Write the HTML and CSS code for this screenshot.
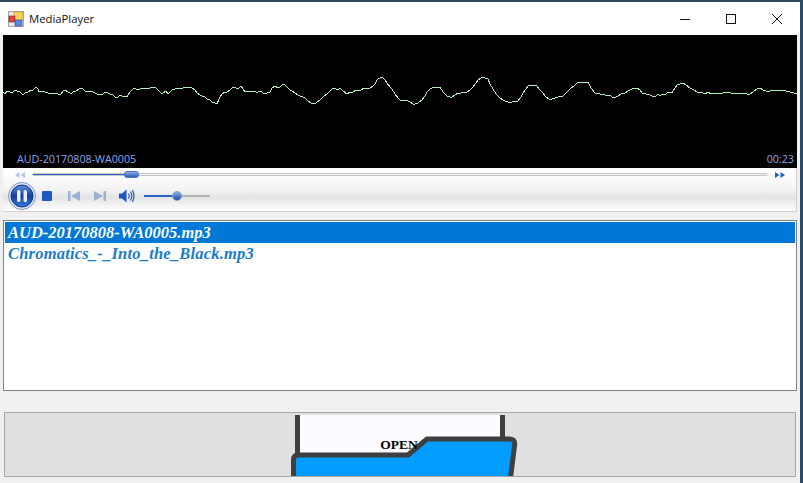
FILE: index.html
```html
<!DOCTYPE html>
<html lang="en">
<head>
    <meta charset="UTF-8">
    <meta name="viewport" content="width=device-width, initial-scale=1.0">
    <title>MediaPlayer</title>
    <link rel="stylesheet" href="styles.css">
</head>
<body>

<div class="window">
    <div class="title-bar">
        <svg class="app-icon" width="16" height="16" viewBox="0 0 16 16">
            <rect x="0.5" y="0.5" width="15" height="15" fill="#e8e8e8" stroke="#a8a8a8"/>
            <rect x="6" y="1" width="9" height="8" fill="#f5d25a" stroke="#c89a20" stroke-width="0.6"/>
            <rect x="1" y="5" width="6" height="6" fill="#d8483c" stroke="#8a2018" stroke-width="0.6"/>
            <rect x="7" y="9" width="7" height="6" fill="#5a88e0" stroke="#2a4a98" stroke-width="0.6"/>
        </svg>
        <span class="app-name">MediaPlayer</span>
        <div class="win-buttons">
            <div class="win-btn">
                <svg width="12" height="12" viewBox="0 0 12 12"><path d="M1 6.500H11" stroke="#111" fill="none"/></svg>
            </div>
            <div class="win-btn">
                <svg width="12" height="12" viewBox="0 0 12 12"><rect x="1.500" y="1.500" width="9" height="9" stroke="#111" fill="none"/></svg>
            </div>
            <div class="win-btn">
                <svg width="12" height="12" viewBox="0 0 12 12"><path d="M1 1L11 11M11 1L1 11" stroke="#111" fill="none"/></svg>
            </div>
        </div>
    </div>

    <div class="scope">
        <svg class="wave" width="794" height="133" viewBox="3 35 794 133">
            <polyline fill="none" stroke="#b6ecb6" stroke-width="1" shape-rendering="crispEdges" points="3,92 5,94 7,91 9,91 11,93 13,92 15,90 17,91 20,92 22,94 24,94 26,92 28,92 31,90 33,90 35,88 36,87 38,89 39,92 42,91 45,92 48,93 50,93 53,94 55,93 58,94 61,94 63,91 65,90 68,92 70,93 71,94 73,92 76,91 79,89 82,88 84,90 86,92 90,91 93,92 97,94 100,95 103,94 105,92 108,93 110,94 113,95 115,97 117,98 120,95 122,96 125,96 127,97 130,92 133,89 135,88 137,90 140,89 143,88 147,89 150,88 153,87 155,87 158,90 160,92 162,94 163,93 166,91 168,94 169,93 172,90 175,89 179,88 183,88 187,87 192,88 195,90 197,93 200,95 202,96 205,97 207,99 210,100 212,102 215,103 217,104 219,99 222,94 225,92 227,92 230,90 232,88 235,87 237,89 239,88 241,86 243,89 245,92 249,91 253,91 256,92 258,92 261,91 263,93 267,93 270,92 272,88 275,86 278,88 280,87 283,84 285,85 287,87 290,90 292,91 295,93 298,95 300,96 303,97 305,98 308,101 311,103 315,104 317,102 320,100 323,97 327,94 330,91 332,89 335,88 337,90 339,89 340,88 343,91 347,94 350,92 353,92 356,90 360,91 364,88 370,88 373,86 375,84 377,80 378,79 380,78 382,77 385,80 387,83 390,87 392,89 395,94 398,98 400,100 403,101 406,100 410,102 413,104 415,104 418,103 422,100 425,96 427,92 430,89 432,88 435,87 438,88 440,87 443,92 447,96 450,97 452,97 455,95 458,93 461,93 464,92 467,92 470,90 473,87 476,83 478,80 481,78 483,77 485,78 488,79 490,84 493,89 496,94 500,98 503,100 505,101 508,102 512,102 515,101 518,101 521,97 523,93 526,89 528,86 531,85 535,85 537,86 540,90 543,93 546,97 550,100 552,99 555,98 558,97 563,96 566,93 570,89 574,86 577,83 580,82 584,83 588,82 591,88 595,93 600,94 605,95 610,95 612,97 614,98 618,96 621,94 625,93 630,90 634,88 637,88 640,90 642,93 646,94 650,95 652,96 655,97 658,94 660,96 662,94 665,95 668,92 672,93 675,88 677,85 680,84 683,83 686,85 690,88 694,90 698,93 701,92 705,94 708,92 711,94 715,93 719,94 723,93 727,92 731,93 734,94 737,93 741,94 744,93 747,94 750,94 753,92 757,89 760,88 763,90 766,91 768,92 772,90 775,91 778,90 782,90 786,91 790,92 794,93 797,94"/>
        </svg>
        <div class="scope-info">
            <span>AUD-20170808-WA0005</span>
            <span>00:23</span>
        </div>
    </div>

    <div class="controls">
        <div class="seek-row">
            <svg class="skip-icon" width="10" height="6" viewBox="0 0 10 6"><path d="M4.500 0V6L0 3ZM10 0V6L5.500 3Z" fill="#b4c6e4"/></svg>
            <div class="seek-track">
                <div class="seek-fill"></div>
                <div class="seek-thumb"></div>
            </div>
            <svg class="skip-icon" width="10" height="6" viewBox="0 0 10 6"><path d="M0 0V6L4.500 3ZM5.500 0V6L10 3Z" fill="#2060c0"/></svg>
        </div>
        <div class="button-row">
            <svg class="pause-btn" width="28" height="28" viewBox="0 0 28 28">
                <defs>
                    <linearGradient id="pauseFill" x1="0" y1="0" x2="0" y2="1">
                        <stop offset="0" stop-color="#5f8ee0"/>
                        <stop offset="0.5" stop-color="#14409c"/>
                        <stop offset="1" stop-color="#3a78e0"/>
                    </linearGradient>
                </defs>
                <circle cx="14" cy="14" r="13.500" fill="#dfe6f2" stroke="#7f9ac8"/>
                <circle cx="14" cy="14" r="11" fill="url(#pauseFill)" stroke="#0e3080"/>
                <rect x="9" y="8" width="3.500" height="12" rx="1.500" fill="#e8eefa"/>
                <rect x="15.500" y="8" width="3.500" height="12" rx="1.500" fill="#e8eefa"/>
            </svg>
            <svg class="stop-icon" width="10" height="10" viewBox="0 0 10 10"><rect width="10" height="10" rx="1" fill="#1c58c0"/></svg>
            <svg class="prev-icon" width="12" height="10" viewBox="0 0 12 10"><path d="M0 0H2.500V10H0ZM12 0V10L3 5Z" fill="#9cb2d4"/></svg>
            <svg class="next-icon" width="12" height="10" viewBox="0 0 12 10"><path d="M12 0H9.500V10H12ZM0 0V10L9 5Z" fill="#9cb2d4"/></svg>
            <svg class="vol-icon" width="16" height="14" viewBox="0 0 16 14">
                <path d="M0 4.500H3L7.500 0.500V13.500L3 9.500H0Z" fill="#1c58c0"/>
                <path d="M9.500 4.500Q11 7 9.500 9.500M11.500 2.500Q14 7 11.500 11.500M13.500 1Q16.500 7 13.500 13" fill="none" stroke="#1c58c0" stroke-width="1.200"/>
            </svg>
            <div class="vol-track">
                <div class="vol-fill"></div>
                <div class="vol-thumb"></div>
            </div>
        </div>
    </div>

    <ul class="playlist">
        <li class="selected">AUD-20170808-WA0005.mp3</li>
        <li>Chromatics_-_Into_the_Black.mp3</li>
    </ul>

    <div class="open-btn">
        <svg class="folder" width="240" height="63" viewBox="285 413 240 63">
            <rect x="298" y="415" width="204" height="50" fill="#fafaff"/>
            <path d="M297.500 415V460M502.500 415V445" stroke="#3f3f3f" stroke-width="5" fill="none"/>
            <path d="M293.500 482V460Q293.500 455 298 455H408L427 439H509Q516 439 514.500 446L510 482Z" fill="#009cff" stroke="#3f3f3f" stroke-width="5" stroke-linejoin="round"/>
        </svg>
        <span class="open-label">OPEN</span>
    </div>
</div>

</body>
</html>
```

FILE: styles.css
```css
html, body {
    margin: 0;
    height: 100%;
}
body {
    background-color: #2c4a66;
    overflow: hidden;
}
.window {
    width: 800px;
    height: 479px;
    margin-top: 2px;
    box-sizing: border-box;
    padding: 0 3px;
    background-color: #f0f0f0;
    display: flex;
    flex-direction: column;
    box-shadow: 0 2px 0 #f0f0f0, 0 4px 0 #1a78c8;
}
.title-bar {
    height: 33px;
    margin: 0 -3px;
    background-color: #fff;
    display: flex;
    align-items: center;
    padding-left: 8px;
    font-family: "Open Sans", sans-serif;
    font-size: 11.300px;
    color: #111;
}
.app-icon {
    margin-right: 5px;
}
.win-buttons {
    margin-left: auto;
    display: flex;
}
.win-btn {
    width: 46px;
    height: 33px;
    display: flex;
    align-items: center;
    justify-content: center;
}
.scope {
    height: 133px;
    background-color: #000;
    position: relative;
}
.wave {
    display: block;
}
.scope-info {
    position: absolute;
    left: 14px;
    right: 3px;
    bottom: 2px;
    display: flex;
    justify-content: space-between;
    font-family: "Open Sans", sans-serif;
    font-size: 10.700px;
    color: #8ea4ee;
}
.controls {
    height: 44px;
    box-sizing: border-box;
    border-bottom: 1px solid #d8ccc6;
    border-right: 1px solid #d8ccc6;
    background: linear-gradient(#fff 0, #f9f9f9 30%, #f0f0f0 55%, #e4e4e4 68%, #f6f6f6 90%, #fcfcfc 100%);
}
.seek-row {
    height: 13px;
    display: flex;
    align-items: center;
    padding-left: 12px;
}
.seek-track {
    position: relative;
    width: 736px;
    height: 3px;
    margin: 0 7px;
    background-color: #f4f4f4;
    border: 1px solid #c4c4c4;
    box-sizing: border-box;
    border-radius: 2px;
}
.seek-fill {
    width: 98px;
    height: 100%;
    background-color: #2c62c8;
}
.seek-thumb {
    position: absolute;
    left: 91px;
    top: -3px;
    width: 15px;
    height: 7px;
    border-radius: 3px;
    background: linear-gradient(#8eaee8, #2c5cbc);
    border: 1px solid #5076b8;
    box-sizing: border-box;
}
.button-row {
    height: 30px;
    display: flex;
    align-items: center;
    padding-left: 5px;
}
.stop-icon {
    margin-left: 6px;
}
.prev-icon {
    margin-left: 16px;
}
.next-icon {
    margin-left: 14px;
}
.vol-icon {
    margin-left: 13px;
}
.vol-track {
    position: relative;
    width: 66px;
    height: 2px;
    margin-left: 9px;
    background-color: #b4b4b4;
}
.vol-fill {
    width: 32px;
    height: 100%;
    background-color: #2c62c8;
}
.vol-thumb {
    position: absolute;
    left: 28px;
    top: -4px;
    width: 10px;
    height: 10px;
    border-radius: 50%;
    background: linear-gradient(#8eaee8, #1c4ca8);
    border: 1px solid #7f9ac8;
    box-sizing: border-box;
}
.playlist {
    list-style: none;
    margin: 8px 0 0;
    padding: 1px;
    height: 171px;
    box-sizing: border-box;
    background-color: #fff;
    border: 1px solid #828282;
    font-family: "Liberation Serif", serif;
    font-size: 16.500px;
    font-weight: bold;
    font-style: italic;
    color: #1a7cc8;
}
.playlist li {
    height: 21px;
    line-height: 21px;
    padding-left: 3px;
}
.playlist li + li {
    letter-spacing: 0.2px;
}
.playlist .selected {
    background-color: #0078d7;
    color: #fff;
}
.open-btn {
    position: relative;
    height: 65px;
    margin: 21px 1px 0;
    box-sizing: border-box;
    background-color: #e0e0e0;
    border: 1px solid #a6a6a6;
    display: flex;
    align-items: center;
    justify-content: center;
    overflow: hidden;
    font-family: "Liberation Serif", serif;
    font-size: 13.500px;
    font-weight: bold;
    color: #000;
}
.folder {
    position: absolute;
    left: 280px;
    top: 0;
}
.open-label {
    position: relative;
    left: -1px;
}
```
